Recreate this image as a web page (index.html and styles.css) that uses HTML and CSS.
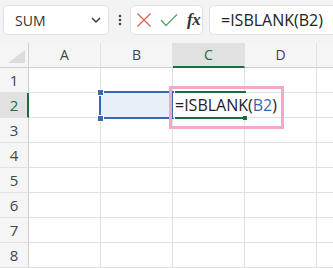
FILE: index.html
```html
<!DOCTYPE html>
<html>
<head>
<meta charset="utf-8">
<link rel="stylesheet" href="styles.css">
</head>
<body>
<div class="app">
  <div class="toolbar">
    <div class="namebox">
      <span class="name">SUM</span>
      <svg class="chev" width="10" height="6" viewBox="0 0 10 6"><polyline points="1,1 5,5 9,1" fill="none" stroke="#333" stroke-width="1.4"/></svg>
    </div>
    <div class="dots">
      <svg width="4" height="12" viewBox="0 0 4 12"><circle cx="2" cy="2" r="1.3" fill="#444"/><circle cx="2" cy="6" r="1.3" fill="#444"/><circle cx="2" cy="10" r="1.3" fill="#444"/></svg>
    </div>
    <div class="fxbox">
      <svg class="cancel" width="16" height="16" viewBox="0 0 16 16"><path d="M1.5 1.5 L14.5 14.5 M14.5 1.5 L1.5 14.5" stroke="#e0625f" stroke-width="1.4" fill="none"/></svg>
      <svg class="enter" width="18" height="14" viewBox="0 0 18 14"><polyline points="1,7 6,12.5 17,1.5" stroke="#5aa56a" stroke-width="1.4" fill="none"/></svg>
      <span class="fx">fx</span>
    </div>
    <div class="formula">=ISBLANK(B2)</div>
  </div>
  <div class="sheet">
    <div class="corner"><svg width="20" height="14" viewBox="0 0 20 14"><polygon points="19,0 19,13 2,13" fill="#dcdcdc"/></svg></div>
    <div class="h">A</div><div class="h">B</div><div class="h hsel">C</div><div class="h">D</div><div class="h"></div>

    <div class="rh">1</div><div class="c"></div><div class="c"></div><div class="c"></div><div class="c"></div><div class="c"></div>
    <div class="rh rsel">2</div><div class="c"></div>
    <div class="c ref"><span class="refbox"><i class="hd tl"></i><i class="hd bl"></i></span></div>
    <div class="c edit"><span class="etop"></span><span class="ebot"></span><span class="ehd"></span><span class="etext">=ISBLANK(<b class="bref">B2</b>)</span></div>
    <div class="c nogrid"></div><div class="c"></div>
    <div class="rh">3</div><div class="c"></div><div class="c"></div><div class="c"></div><div class="c"></div><div class="c"></div>
    <div class="rh">4</div><div class="c"></div><div class="c"></div><div class="c"></div><div class="c"></div><div class="c"></div>
    <div class="rh">5</div><div class="c"></div><div class="c"></div><div class="c"></div><div class="c"></div><div class="c"></div>
    <div class="rh">6</div><div class="c"></div><div class="c"></div><div class="c"></div><div class="c"></div><div class="c"></div>
    <div class="rh">7</div><div class="c"></div><div class="c"></div><div class="c"></div><div class="c"></div><div class="c"></div>
    <div class="rh">8</div><div class="c"></div><div class="c"></div><div class="c"></div><div class="c"></div><div class="c"></div>
  </div>
  <div class="annot"></div>
</div>
</body>
</html>
```
FILE: styles.css
```css
html, body {
  margin: 0;
  padding: 0;
  background: #ffffff;
}
.app {
  position: relative;
  width: 333px;
  height: 268px;
  overflow: hidden;
  font-family: "Open Sans", "Liberation Sans", sans-serif;
  color: #333;
}
.toolbar {
  height: 43px;
  box-sizing: border-box;
  padding: 5px 0 0 3px;
  background: #f3f3f3;
  display: flex;
  align-items: flex-start;
}
.namebox {
  width: 106px;
  height: 30px;
  box-sizing: border-box;
  background: #fff;
  border: 1px solid #e0e0e0;
  border-radius: 5px;
  display: flex;
  align-items: center;
  justify-content: space-between;
  padding: 0 7px 0 11px;
  flex-shrink: 0;
}
.name {
  font-size: 14px;
  color: #333;
}
.chev {
  display: block;
}
.dots {
  width: 21px;
  height: 30px;
  display: flex;
  align-items: center;
  justify-content: center;
  flex-shrink: 0;
}
.dots svg { display: block; }
.fxbox {
  width: 73px;
  height: 30px;
  box-sizing: border-box;
  background: #fff;
  border: 1px solid #e0e0e0;
  border-radius: 5px;
  display: flex;
  align-items: center;
  padding-left: 5px;
  gap: 7px;
  flex-shrink: 0;
}
.fxbox svg { display: block; }
.enter { margin-left: 1px; }
.fx {
  font-family: "Liberation Serif", serif;
  font-style: italic;
  font-weight: bold;
  font-size: 17px;
  color: #333;
  margin-left: 2px;
  letter-spacing: -0.5px;
}
.formula {
  margin-left: 6px;
  width: 150px;
  height: 30px;
  box-sizing: border-box;
  background: #fff;
  border: 1px solid #e0e0e0;
  border-radius: 5px;
  flex-shrink: 0;
  font-size: 16px;
  line-height: 28px;
  padding-left: 11px;
  color: #222;
}
.sheet {
  display: grid;
  grid-template-columns: 29px 72px 72px 72px 72px 72px;
  grid-auto-rows: 25px;
}
.sheet > div {
  box-sizing: border-box;
  border-right: 1px solid #e1e1e1;
  border-bottom: 1px solid #e1e1e1;
}
.corner {
  background: #f5f5f5;
  display: flex;
  align-items: flex-end;
  padding: 0 0 3px 6px;
}
.corner svg { display: block; }
.sheet > .corner, .sheet > .h {
  border-bottom: 1px solid #cfcfcf;
}
.sheet > .corner { border-right: 1px solid #cfcfcf; }
.h {
  background: #f5f5f5;
  font-size: 14px;
  color: #444;
  text-align: center;
  line-height: 24px;
}
.sheet > .hsel {
  background: #e1e1e1;
  color: #1d6c3e;
  border-bottom: 2px solid #1f6b40;
}
.rh {
  background: #f5f5f5;
  font-size: 15px;
  color: #444;
  text-align: center;
  line-height: 24px;
}
.sheet > .rh { border-right: 1px solid #cfcfcf; }
.sheet > .rsel {
  background: #e1e1e1;
  color: #1d6c3e;
  border-right: 2px solid #1f6b40;
  padding-left: 1px;
}
.c { background: #fff; }
.ref {
  position: relative;
  background: #e9eff9 !important;
}
.refbox {
  position: absolute;
  left: -2px;
  top: -2px;
  right: -2px;
  bottom: -2px;
  border: 2px solid #3a67ad;
}
.hd {
  position: absolute;
  width: 5px;
  height: 5px;
  background: #3a67ad;
  outline: 1px solid #fff;
}
.tl { left: -3.5px; top: -3.5px; }
.bl { left: -3.5px; bottom: -3.5px; }
.sheet > .edit {
  position: relative;
  border-right-color: #fff;
  z-index: 2;
}
.etop {
  position: absolute;
  left: 2px;
  width: 71px;
  top: -2px;
  height: 2px;
  background: #1f6b40;
}
.ebot {
  position: absolute;
  left: 2px;
  width: 69px;
  bottom: -2px;
  height: 2px;
  background: #1f6b40;
}
.ehd {
  position: absolute;
  right: -3px;
  bottom: -3px;
  width: 4px;
  height: 4px;
  background: #1f6b40;
}
.etext {
  position: relative;
  white-space: nowrap;
  font-size: 16px;
  line-height: 24px;
  padding-left: 2px;
  color: #222;
}
.bref {
  font-weight: normal;
  color: #3a67ad;
}
.annot {
  position: absolute;
  left: 169px;
  top: 86px;
  width: 115px;
  height: 43px;
  box-sizing: border-box;
  border: 3px solid #f3a8c8;
  z-index: 5;
}
```
